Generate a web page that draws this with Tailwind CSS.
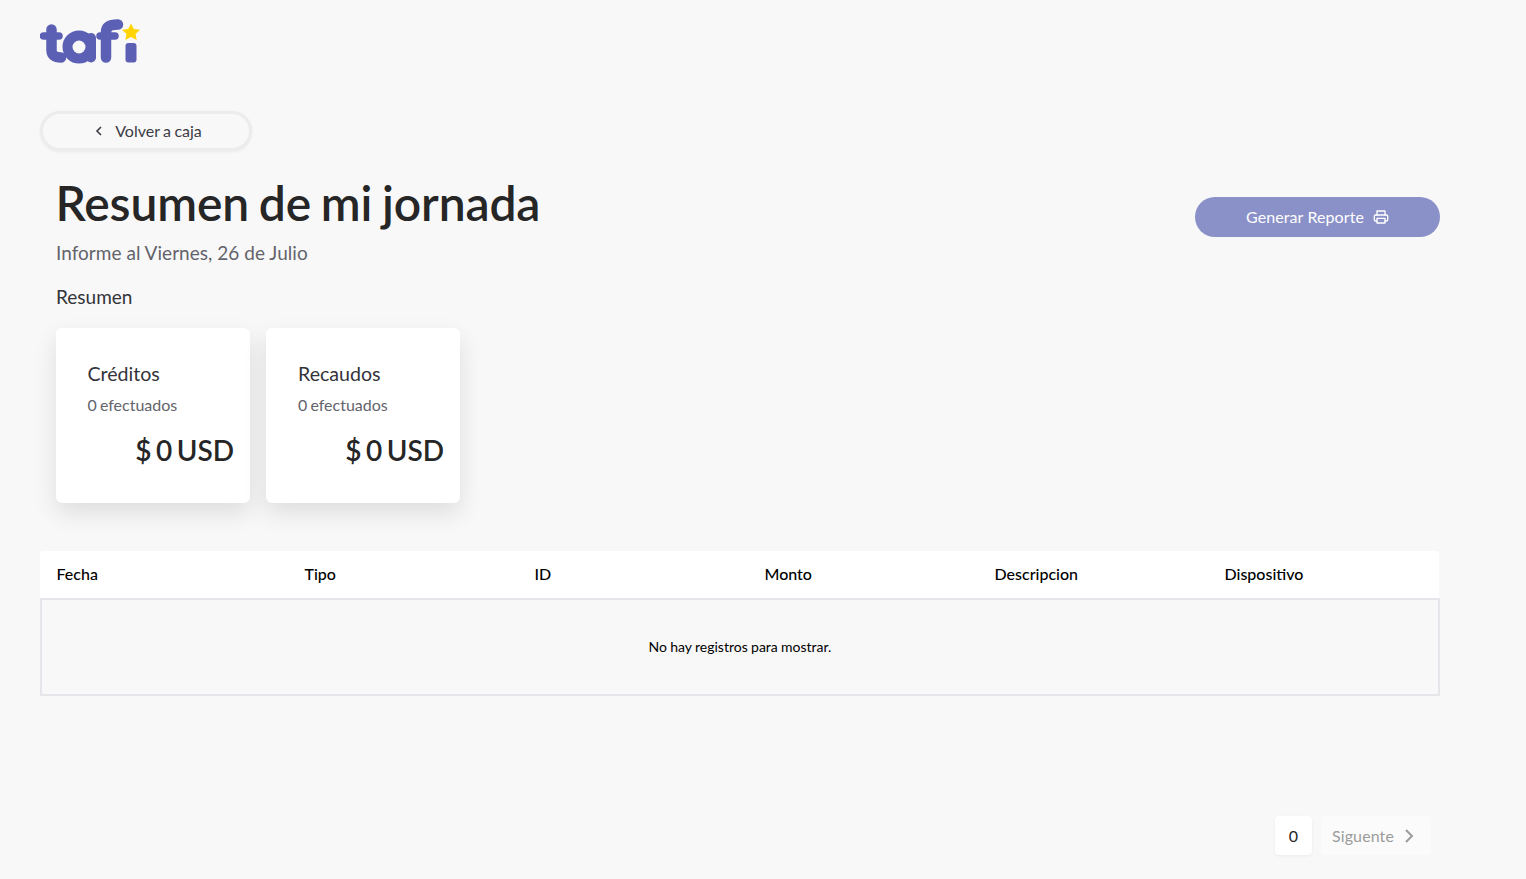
<!doctype html>
<html lang="es">
<head>
<meta charset="utf-8">
<script src="https://cdn.jsdelivr.net/npm/@tailwindcss/browser@4"></script>
<title>Resumen de mi jornada</title>
</head>
<body class="bg-[#f8f8f8] font-['Lato','Noto_Sans',sans-serif] text-[#262626] h-[879px] overflow-hidden">
<div class="flex flex-col w-[1526px] h-[879px] pl-10 pr-[86px]">
  <header class="h-[84px] pt-[18px]">
    <svg width="102" height="48" viewBox="0 0 102 48" class="block" aria-label="tafi">
      <g fill="none" stroke="#5c60b5" stroke-linecap="round" stroke-linejoin="round">
        <path d="M3.5 18H19" stroke-width="7.500"/>
        <path d="M11.500 11.500V32Q11.500 39.500 21 39.500" stroke-width="10.500"/>
        <circle cx="39" cy="29" r="11.500" stroke-width="10"/>
        <path d="M51 20V39.500" stroke-width="10"/>
        <path d="M66 39.500V14Q66 6.500 78 6.500" stroke-width="10.500"/>
        <path d="M60 18H75" stroke-width="7.500"/>
      </g>
      <rect x="85.500" y="25" width="11" height="19.500" rx="3" fill="#5c60b5"/>
      <path d="M91 5.500l2.800 5.500 6.300.8-4.600 4.200 1.200 6-5.700-3-5.700 3 1.200-6-4.600-4.200 6.300-.8z" fill="#ffd400"/>
    </svg>
  </header>
  <a class="flex items-center justify-center gap-[10px] w-[212px] h-[40px] mt-[27px] pl-[3px] rounded-full border-[3px] border-[#ececec] bg-[#f8f8f8] text-[16px] text-[#3c3c46] [word-spacing:-0.700px] shadow-[0_1px_3px_rgba(0,0,0,0.06)]">
    <svg width="12" height="12" viewBox="0 0 12 12" fill="none" stroke="#3c3c46" stroke-width="1.600"><path d="M8 2L4 6l4 4"/></svg>
    <span>Volver a caja</span>
  </a>
  <section class="flex justify-between items-center pl-4 mt-[18px]">
    <div>
      <h1 class="text-[48px] leading-[68px] font-semibold tracking-[-0.150px] [word-spacing:-2px] text-[#262626] -ml-[0.500px]">Resumen de mi jornada</h1>
      <p class="text-[19px] leading-[28px] mt-[2px] text-[#63636b] tracking-[0.030px]">Informe al Viernes, 26 de Julio</p>
    </div>
    <button class="flex items-center justify-center gap-[9px] w-[245px] h-[40px] mb-[3px] rounded-full bg-[#8a90c8] text-white text-[16px] tracking-[0.100px]">
      <span>Generar Reporte</span>
      <svg width="16" height="16" viewBox="0 0 24 24" fill="none" stroke="currentColor" stroke-width="2" stroke-linecap="round" stroke-linejoin="round"><path d="M6 9V3h12v6"/><path d="M6 18H4a2 2 0 0 1-2-2v-5a2 2 0 0 1 2-2h16a2 2 0 0 1 2 2v5a2 2 0 0 1-2 2h-2"/><rect x="6" y="14" width="12" height="7"/></svg>
    </button>
  </section>
  <h2 class="pl-4 mt-[16px] text-[19px] leading-[28px] text-[#33333a]">Resumen</h2>
  <div class="flex gap-4 pl-4 mt-[17px]">
    <article class="w-[194px] h-[175px] rounded-md bg-white shadow-[0_10px_24px_rgba(0,0,0,0.11)] pt-[32px] pl-[31.500px] pr-4">
      <h3 class="text-[19.600px] leading-[28px] text-[#33333a]">Créditos</h3>
      <p class="text-[16px] leading-[24px] mt-[5px] text-[#63636b] [word-spacing:-1px]">0 efectuados</p>
      <p class="text-[28px] leading-[40px] mt-[13px] font-semibold text-right whitespace-nowrap text-[#262626] [word-spacing:-2.500px]">$ 0 USD</p>
    </article>
    <article class="w-[194px] h-[175px] rounded-md bg-white shadow-[0_10px_24px_rgba(0,0,0,0.11)] pt-[32px] pl-[32px] pr-4">
      <h3 class="text-[19.600px] leading-[28px] text-[#33333a]">Recaudos</h3>
      <p class="text-[16px] leading-[24px] mt-[5px] text-[#63636b] [word-spacing:-1px]">0 efectuados</p>
      <p class="text-[28px] leading-[40px] mt-[13px] font-semibold text-right whitespace-nowrap text-[#262626] [word-spacing:-2.500px]">$ 0 USD</p>
    </article>
  </div>
  <div class="mt-[48px] w-[1400px]">
    <div class="grid grid-cols-[248px_230px_230px_230px_230px_1fr] items-center h-[47px] pb-[1px] mr-[1px] pl-[16.500px] bg-white rounded-t-[4px] text-[16px] font-medium text-black">
      <span>Fecha</span><span>Tipo</span><span>ID</span><span>Monto</span><span>Descripcion</span><span>Dispositivo</span>
    </div>
    <div class="flex items-center justify-center h-[98px] pb-[2px] border-2 border-[#e6e6ea] text-[14px] text-black [word-spacing:-0.300px]">No hay registros para mostrar.</div>
  </div>
  <nav class="flex justify-end gap-[9px] mt-[120px] pr-[9px]">
    <span class="flex items-center justify-center w-[37px] h-[39px] rounded-[4px] bg-white text-[16px] text-[#262626] shadow-[0_1px_3px_rgba(0,0,0,0.06)]">0</span>
    <span class="flex items-center justify-center gap-[10px] w-[110px] h-[39px] pr-[6px] rounded-[4px] bg-[#fbfbfb] text-[16px] tracking-[0.100px] text-[#9c9c9c]">Siguente
      <svg width="10" height="16" viewBox="0 0 10 16" fill="none" stroke="#9c9c9c" stroke-width="2"><path d="M2 2l6 6-6 6"/></svg>
    </span>
  </nav>
</div>
</body>
</html>
